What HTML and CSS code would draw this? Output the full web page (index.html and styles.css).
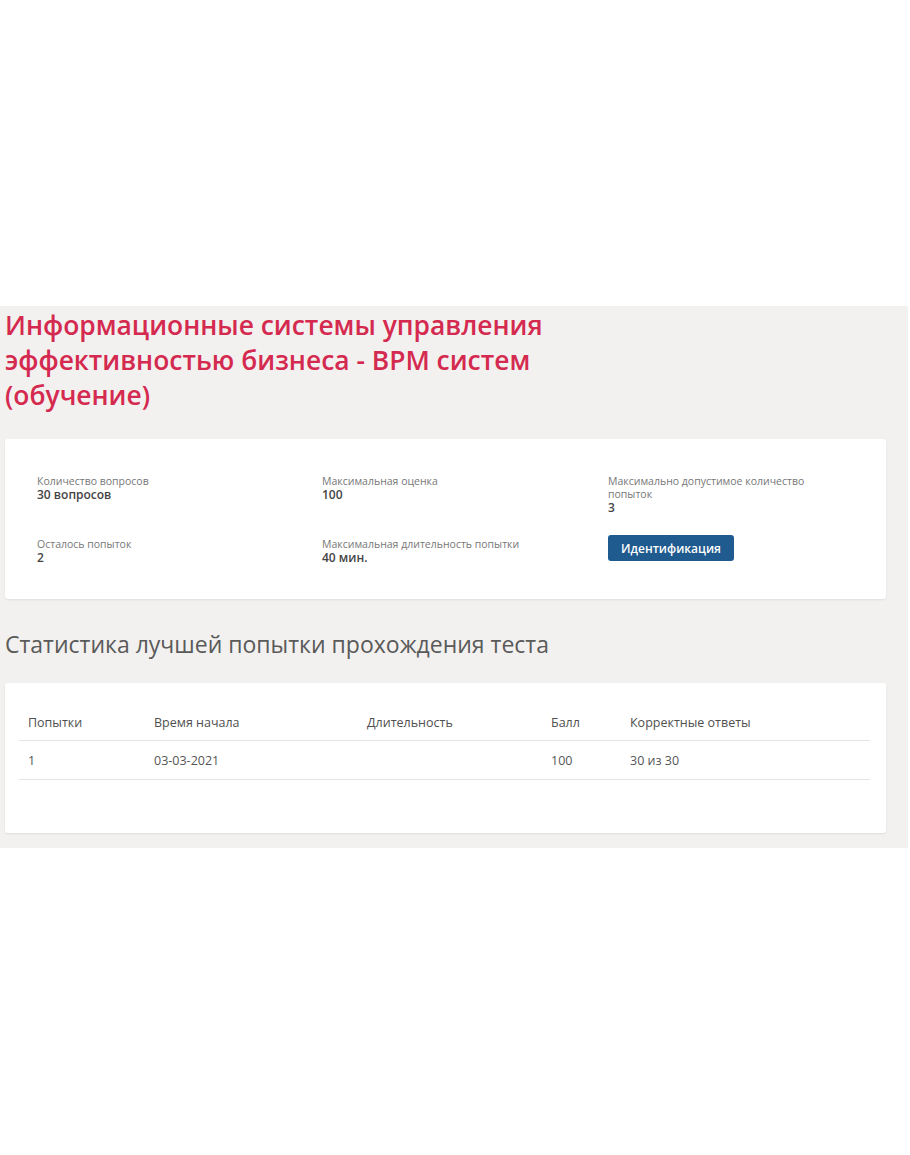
FILE: index.html
```html
<!DOCTYPE html>
<html lang="ru">
<head>
<meta charset="utf-8">
<link rel="stylesheet" href="styles.css">
</head>
<body>
<div class="top-space"></div>
<main class="panel">
  <h1 class="title">Информационные системы управления эффективностью бизнеса - BPM систем (обучение)</h1>
  <section class="card info-card">
    <div class="info-grid">
      <div class="item">
        <div class="label">Количество вопросов</div>
        <div class="value">30 вопросов</div>
      </div>
      <div class="item">
        <div class="label">Максимальная оценка</div>
        <div class="value">100</div>
      </div>
      <div class="item">
        <div class="label">Максимально допустимое количество попыток</div>
        <div class="value">3</div>
      </div>
      <div class="item">
        <div class="label">Осталось попыток</div>
        <div class="value">2</div>
      </div>
      <div class="item">
        <div class="label">Максимальная длительность попытки</div>
        <div class="value">40 мин.</div>
      </div>
      <div class="item">
        <button class="btn">Идентификация</button>
      </div>
    </div>
  </section>
  <h2 class="subtitle">Статистика лучшей попытки прохождения теста</h2>
  <section class="card table-card">
    <table class="stats">
      <thead>
        <tr>
          <th class="c1">Попытки</th>
          <th class="c2">Время начала</th>
          <th class="c3">Длительность</th>
          <th class="c4">Балл</th>
          <th class="c5">Корректные ответы</th>
        </tr>
      </thead>
      <tbody>
        <tr>
          <td>1</td>
          <td>03-03-2021</td>
          <td></td>
          <td>100</td>
          <td>30 из 30</td>
        </tr>
      </tbody>
    </table>
  </section>
</main>
</body>
</html>
```

FILE: styles.css
```css
html, body {
  margin: 0;
  padding: 0;
  background: #ffffff;
}
body {
  font-family: "Open Sans", "Liberation Sans", sans-serif;
  color: #444;
}
.top-space {
  height: 306px;
}
.panel {
  width: 908px;
  background: #f2f1ef;
  padding: 2px 0 15px 0;
  box-sizing: border-box;
}
.title {
  margin: 0;
  padding: 0 5px;
  width: 580px;
  font-family: "Open Sans", sans-serif;
  font-weight: 600;
  font-size: 26.4px;
  line-height: 35px;
  color: #d52a50;
}
.card {
  margin-left: 5px;
  width: 881px;
  background: #ffffff;
  border-radius: 3px;
  box-shadow: 0 1px 2px rgba(0,0,0,0.08);
  box-sizing: border-box;
}
.info-card {
  margin-top: 26px;
  padding: 36px 32px 35px 32px;
}
.info-grid {
  display: grid;
  grid-template-columns: 285px 286px 1fr;
  row-gap: 24px;
}
.label {
  font-size: 10.5px;
  line-height: 13px;
  color: #777;
  width: 210px;
}
.value {
  font-size: 12px;
  line-height: 13px;
  font-weight: 600;
  color: #444;
}
.btn {
  display: block;
  margin-top: -3px;
  width: 126px;
  height: 26px;
  border: none;
  border-radius: 3px;
  background: #1f5b8e;
  color: #ffffff;
  font-family: "Open Sans", sans-serif;
  font-size: 12px;
  font-weight: 600;
  padding: 0;
}
.subtitle {
  margin: 30px 0 0 0;
  padding: 0 5px;
  font-family: "Open Sans", sans-serif;
  font-weight: 400;
  font-size: 23px;
  line-height: 30px;
  color: #5a5a5a;
}
.table-card {
  margin-top: 24px;
  padding: 22px 16px 53px 14px;
}
.stats {
  width: 100%;
  border-collapse: collapse;
  font-size: 12.5px;
  color: #555;
}
.stats th, .stats td {
  text-align: left;
  padding: 0 0 0 9px;
  border-bottom: 1px solid #e4e4e4;
}
.stats th {
  font-weight: 400;
  height: 35px;
  color: #505050;
}
.stats td {
  height: 38px;
}
.c1 { width: 117px; }
.c2 { width: 204px; }
.c3 { width: 175px; }
.c4 { width: 70px; }
```
